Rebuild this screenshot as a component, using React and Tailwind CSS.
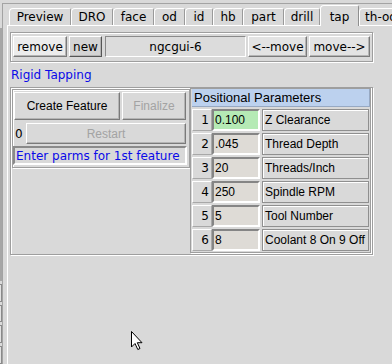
import React from "react";

const DV = "font-['DejaVu_Sans',sans-serif]";
const LS = "font-['Liberation_Sans',Arial,sans-serif]";

function Btn({ className = "", children }) {
  return (
    <div
      className={`flex shrink-0 items-center justify-center border border-t-white border-l-white border-r-[#7a7a7a] border-b-[#7a7a7a] shadow-[inset_-1px_-1px_0_#b4b4b4] ${className}`}
    >
      {children}
    </div>
  );
}

const tabs = [
  ["Preview", "w-[62px]"],
  ["DRO", "w-[42px]"],
  ["face", "w-[41px]"],
  ["od", "w-[31px]"],
  ["id", "w-[28px]"],
  ["hb", "w-[30px]"],
  ["part", "w-[41px]"],
  ["drill", "w-[36px]"],
  ["tap", "w-[39px]"],
  ["th-od", "w-[44px]"],
];

const rows = [
  ["1", "0.100", "Z Clearance", true],
  ["2", ".045", "Thread Depth", false],
  ["3", "20", "Threads/Inch", false],
  ["4", "250", "Spindle RPM", false],
  ["5", "5", "Tool Number", false],
  ["6", "8", "Coolant 8 On 9 Off", false],
];

export default function App() {
  return (
    <div className="relative flex h-[364px] w-[392px] overflow-hidden bg-[#d9d9d9] text-black">
      {/* far-left strip */}
      <div className="flex w-[2px] shrink-0 flex-col">
        <div className="h-[28px]" />
        <div className="h-[256px] bg-[#a6a6a6]" />
        <div className="mt-[3px] h-[18px] border-y border-r border-[#8a8a8a] bg-[#e2e2e2]" />
        <div className="mt-[3px] h-[18px] border-y border-r border-[#8a8a8a] bg-[#e2e2e2]" />
        <div className="mt-[3px] h-[18px] border-y border-r border-[#8a8a8a] bg-[#e2e2e2]" />
        <div className="mt-[3px] h-[18px] border-y border-r border-[#8a8a8a] bg-[#e2e2e2]" />
      </div>

      <div className="mt-[3px] flex flex-1 flex-col border-l border-t border-[#a3a3a3]">
        <div className="ml-[4px] flex flex-1 flex-col">
          {/* tab bar */}
          <div className={`flex h-[21px] items-end pl-[2px] text-[12px] ${DV}`}>
            {tabs.map(([t, w]) =>
              t === "tap" ? (
                <div
                  key={t}
                  className={`relative z-10 -mb-px flex h-[21px] shrink-0 items-start justify-center rounded-tl-[4px] rounded-tr-[2px] border-l border-t border-r border-l-white border-t-white border-r-[#8f8f8f] bg-[#d9d9d9] pt-[2px] ${w}`}
                >
                  {t}
                </div>
              ) : (
                <div
                  key={t}
                  className={`flex h-[17px] shrink-0 items-center justify-center rounded-tl-[4px] rounded-tr-[2px] border-l border-t border-r border-l-white border-t-white border-r-[#9a9a9a] pb-[1px] leading-none ${w}`}
                >
                  {t}
                </div>
              )
            )}
          </div>

          {/* panel */}
          <div className="flex flex-1 flex-col border-l border-t border-white">
            {/* top button row */}
            <div
              className={`ml-[2px] mt-[6px] flex h-[30px] w-[363px] border border-[#9e9e9e] pl-[1px] pt-[3px] text-[12px] shadow-[inset_1px_1px_0_#fff,1px_1px_0_#fff] ${DV}`}
            >
              <Btn className="ml-[1px] h-[21px] w-[54px] bg-[#ececec]">remove</Btn>
              <Btn className="ml-[2px] h-[21px] w-[33px] border-r-[#555] border-b-[#555] bg-[#d4d4d4]">new</Btn>
              <div className="ml-[3px] flex h-[21px] w-[141px] shrink-0 items-center justify-center border border-t-[#8a8a8a] border-l-[#8a8a8a] border-b-white border-r-white bg-[#dcdcdc]">
                ngcgui-6
              </div>
              <Btn className="ml-[2px] h-[21px] w-[59px] bg-[#e3e3e3]">&lt;--move</Btn>
              <Btn className="ml-[2px] h-[21px] w-[61px] bg-[#e3e3e3]">move--&gt;</Btn>
            </div>

            {/* title */}
            <div className={`ml-[3px] mt-[6px] h-[14px] text-[12px] leading-[14px] text-[#0a0ae8] ${DV}`}>
              Rigid Tapping
            </div>

            {/* big frame */}
            <div className="ml-[2px] mt-[5px] flex h-[168px] w-[363px] border border-[#9e9e9e] shadow-[inset_1px_1px_0_#fff,1px_1px_0_#fff]">
              {/* left subframe */}
              <div className="ml-[1px] mt-[1px] flex h-[79px] w-[178px] shrink-0 flex-col border border-[#9e9e9e] pt-[2px] shadow-[inset_1px_1px_0_#fff,1px_1px_0_#fff]">
                <div className={`flex pl-[1px] text-[12px] ${LS}`}>
                  <Btn className="h-[28px] w-[106px]">Create Feature</Btn>
                  <Btn className="ml-[2px] h-[28px] w-[64px] text-[#a3a3a3]">Finalize</Btn>
                </div>
                <div className="mt-[3px] flex items-center pl-[1px]">
                  <div className={`w-[12px] pl-[1px] text-[12px] ${DV}`}>0</div>
                  <Btn className={`h-[21px] w-[160px] text-[12px] text-[#a3a3a3] ${LS}`}>Restart</Btn>
                </div>
                <div
                  className={`mt-[2px] flex h-[19px] w-[174px] items-center border-2 border-t-[#8a8a8a] border-l-[#8a8a8a] border-b-white border-r-white pl-[1px] text-[12px] text-[#0a0ae8] ${DV}`}
                >
                  Enter parms for 1st feature
                </div>
              </div>

              {/* table */}
              <div className="flex h-[165px] w-[181px] shrink-0 flex-col border border-[#9e9e9e] pl-[1px] shadow-[1px_1px_0_#fff]">
                <div
                  className={`flex h-[18px] w-[178px] items-center border-b border-r border-[#97a9c3] bg-[#bcd1ee] pl-[2px] text-[13px] ${LS}`}
                >
                  Positional Parameters
                </div>
                {rows.map(([n, v, label, active]) => (
                  <div key={n} className="mt-[2px] flex h-[22px]">
                    <div
                      className={`flex w-[20px] shrink-0 items-center justify-end border border-t-white border-l-white border-r-[#a8a8a8] border-b-[#a8a8a8] pr-[2px] text-[12px] ${DV}`}
                    >
                      {n}
                    </div>
                    <div
                      className={`flex w-[48px] shrink-0 items-center border-2 border-t-[#858585] border-l-[#858585] border-b-white border-r-white pl-[1px] text-[12px] ${LS} ${
                        active ? "bg-[#b5eab5]" : "bg-[#dedbd6]"
                      }`}
                    >
                      {v}
                    </div>
                    <div
                      className={`ml-[2px] flex w-[107px] shrink-0 items-center border border-[#8f8f8f] pl-[2px] text-[12px] shadow-[inset_1px_1px_0_#fff] ${LS}`}
                    >
                      {label}
                    </div>
                  </div>
                ))}
              </div>
            </div>
          </div>
        </div>
      </div>

      {/* mouse pointer */}
      <svg
        className="absolute left-[130px] top-[331px]"
        width="14"
        height="20"
        viewBox="0 0 14 20"
      >
        <path
          d="M1.5 0.5 L1.5 16 L5 12.5 L7.8 18.5 L10 17.5 L7.3 11.7 L12 11.7 Z"
          fill="#fff"
          stroke="#000"
          strokeWidth="1"
          strokeLinejoin="miter"
        />
      </svg>
    </div>
  );
}
